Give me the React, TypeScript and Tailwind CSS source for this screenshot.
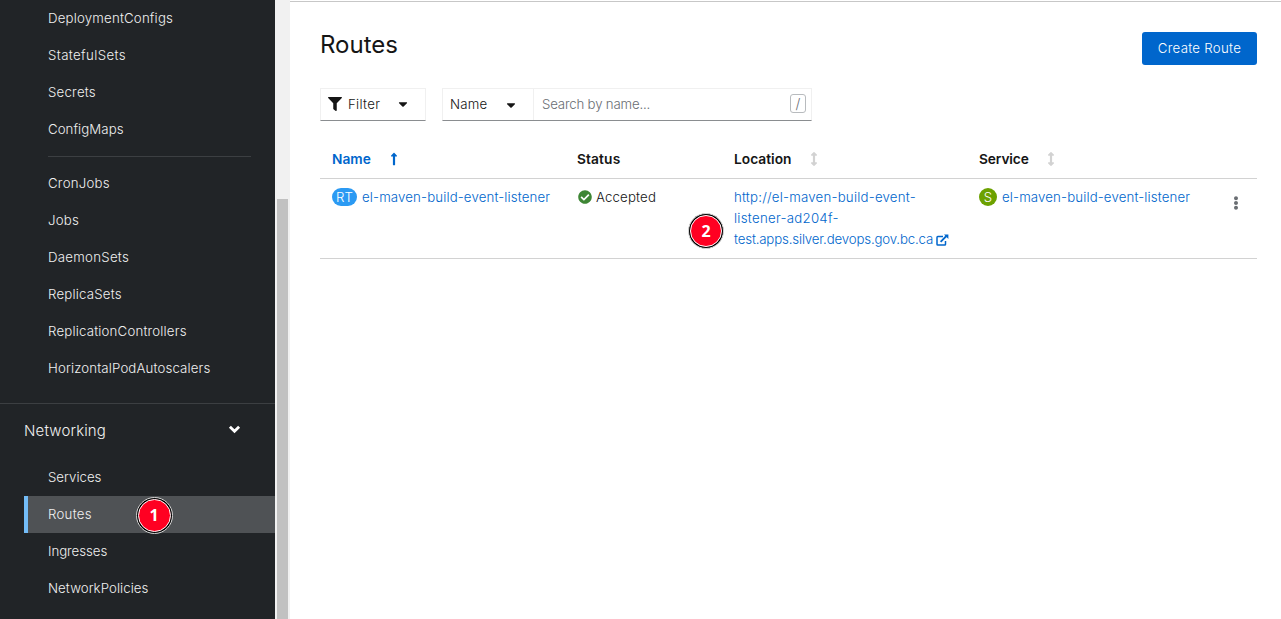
import React from "react";
import { FaFilter, FaCaretDown, FaLongArrowAltUp, FaArrowsAltV, FaCheckCircle, FaEllipsisV } from "react-icons/fa";

type NavEntry = { label: string; active?: boolean; track: string };

const workloads: NavEntry[] = [
  { label: "DeploymentConfigs", track: "tracking-[0.18px]" },
  { label: "StatefulSets", track: "tracking-[0.38px]" },
  { label: "Secrets", track: "tracking-[0.22px]" },
  { label: "ConfigMaps", track: "tracking-[0.06px]" },
];

const jobs: NavEntry[] = [
  { label: "CronJobs", track: "tracking-[0.22px]" },
  { label: "Jobs", track: "tracking-[0.22px]" },
  { label: "DaemonSets", track: "tracking-[0.26px]" },
  { label: "ReplicaSets", track: "tracking-[0.2px]" },
  { label: "ReplicationControllers", track: "tracking-[0.18px]" },
  { label: "HorizontalPodAutoscalers", track: "tracking-[0.13px]" },
];

const networking: NavEntry[] = [
  { label: "Services", track: "tracking-normal" },
  { label: "Routes", active: true, track: "tracking-[0.26px]" },
  { label: "Ingresses", track: "tracking-[-0.05px]" },
  { label: "NetworkPolicies", track: "tracking-[0.06px]" },
];

function Marker({ n, className }: { n: number; className: string }) {
  return (
    <span className={`absolute flex items-center justify-center rounded-full border border-[#d8d8d8] bg-black p-[1px] ${className}`}>
      <span className="flex size-full items-center justify-center rounded-full border border-white bg-[#ff0022] font-['Noto_Sans'] text-[16px] leading-none font-bold text-white">
        {n}
      </span>
    </span>
  );
}

function ExternalLink() {
  return (
    <svg viewBox="0 0 13 12" className="h-3 w-[13px]" fill="none" stroke="currentColor">
      <path d="M7 2.6H1.8a.8.8 0 0 0-.8.8v6.8a.8.8 0 0 0 .8.8h6.9a.8.8 0 0 0 .8-.8V7" strokeWidth="1.5" />
      <path d="M4.6 7.8 10.4 2" strokeWidth="1.8" />
      <path d="M8 .6h4.4V5Z" fill="currentColor" stroke="none" />
    </svg>
  );
}

function NavItem({ item }: { item: NavEntry }) {
  return (
    <li className={`relative ml-6 flex h-[37px] items-center border-l-4 pl-5 ${item.active ? "border-[#73bcf7] bg-[#4f5255]" : "border-transparent"}`}>
      <span className={item.track}>{item.label}</span>
      {item.active && <Marker n={1} className="top-[0.5px] left-[107.5px] size-[37px]" />}
    </li>
  );
}

function Sidebar() {
  return (
    <nav className="flex w-[275px] shrink-0 flex-col bg-[#212427] text-[13.25px] text-[#f0f0f0]">
      <ul>{workloads.map((i) => <NavItem key={i.label} item={i} />)}</ul>
      <div className="mt-2 mr-6 mb-2 ml-12 h-px shrink-0 bg-[#3c3f42]" />
      <ul>{jobs.map((i) => <NavItem key={i.label} item={i} />)}</ul>
      <div className="mt-4 h-px shrink-0 bg-[#3c3f42]" />
      <div className="flex h-[55px] shrink-0 items-center justify-between pr-[34px] pl-6 text-[15px]">
        <span className="tracking-[0.15px]">Networking</span>
        <svg viewBox="0 0 13 9" className="mb-1 h-[9px] w-[13px] text-white" fill="none" stroke="currentColor" strokeWidth="2.8">
          <path d="m1.9 1.7 4.6 4.5 4.6-4.5" />
        </svg>
      </div>
      <ul>{networking.map((i) => <NavItem key={i.label} item={i} />)}</ul>
    </nav>
  );
}

function Toolbar() {
  return (
    <div className="mt-[23px] flex h-[33px] gap-4 text-[13.25px]">
      <button className="flex w-[106px] items-center border border-[#f0f0f0] border-b-[#8a8d90] pl-[7px]">
        <FaFilter className="mb-px size-[14px]" />
        <span className="ml-[6px] w-[33px] text-left tracking-[0.28px]">Filter</span>
        <FaCaretDown className="mb-[2px] ml-[15px] size-[14px]" />
      </button>
      <div className="flex w-[370px] border border-[#f0f0f0] border-b-[#8a8d90]">
        <button className="flex w-[91px] items-center border-r border-[#f0f0f0] pl-[7px]">
          <span className="w-[38px] text-left tracking-[0.2px]">Name</span>
          <FaCaretDown className="ml-[16px] size-[14px]" />
        </button>
        <div className="flex flex-1 items-center justify-between pr-[5px] pl-2 text-[#6a6e73]">
          <span className="tracking-[-0.19px]">Search by name...</span>
          <kbd className="mb-[2px] flex h-[19px] w-4 items-center justify-center rounded-[3px] border border-[#b8bbbe] font-[inherit] text-[14px]">/</kbd>
        </div>
      </div>
    </div>
  );
}

const columns = "grid grid-cols-[245px_157px_245px_245px_1fr] pl-3";

function RoutesTable() {
  return (
    <section className="mt-[19px] text-[13.25px] leading-[21px]">
      <div className={`${columns} h-[39px] items-center border-b border-[#d2d2d2] text-[13.75px] font-semibold`}>
        <div className="flex items-center text-[#0066cc]">
          <span className="w-[55px]">Name</span>
          <FaLongArrowAltUp className="size-[14px]" />
        </div>
        <div className="tracking-[0.12px]">Status</div>
        <div className="flex items-center">
          <span className="w-[73px]">Location</span>
          <FaArrowsAltV className="size-[14px] text-[#d2d2d2]" />
        </div>
        <div className="flex items-center">
          <span className="w-[65px] tracking-[-0.12px]">Service</span>
          <FaArrowsAltV className="size-[14px] text-[#d2d2d2]" />
        </div>
      </div>
      <div className={`${columns} h-[80px] border-b border-[#d2d2d2] pt-2`}>
        <a className="flex h-[21px] items-center text-[#0066cc]">
          <span className="mb-px flex h-[18px] w-[25px] items-center justify-center rounded-full bg-[#2b9af3] text-white">RT</span>
          <span className="ml-[5px] tracking-[0.13px]">el-maven-build-event-listener</span>
        </a>
        <div className="flex h-[21px] items-center">
          <FaCheckCircle className="mb-px ml-px size-[14px] text-[#3e8635]" />
          <span className="ml-[4px] tracking-[0.15px]">Accepted</span>
        </div>
        <a className="relative flex flex-col text-[#0066cc]">
          <span className="h-[21px] tracking-[0.21px]">http://el-maven-build-event-</span>
          <span className="h-[21px] tracking-[0.27px]">listener-ad204f-</span>
          <span className="flex h-[21px] items-center whitespace-nowrap">
            <span className="w-[202px] tracking-[-0.16px]">test.apps.silver.devops.gov.bc.ca</span>
            <ExternalLink />
          </span>
          <Marker n={2} className="top-[26px] left-[-46px] size-[36px]" />
        </a>
        <a className="flex h-[21px] items-center text-[#0066cc]">
          <span className="mb-px flex size-[18px] items-center justify-center rounded-full bg-[#6ca100] text-white">S</span>
          <span className="ml-[5px] tracking-[0.13px]">el-maven-build-event-listener</span>
        </a>
        <FaEllipsisV className="mt-[9px] ml-[5px] size-[14px] text-[#6a6e73]" />
      </div>
    </section>
  );
}

export default function App() {
  return (
    <div className="flex h-[619px] w-[1281px] overflow-hidden bg-white font-['Inter',sans-serif] font-[350] text-[#151515]">
      <Sidebar />
      <div className="flex w-[15px] shrink-0 flex-col bg-[#f1f1f1] pt-[199px] pr-[2px] pl-[2px]">
        <div className="flex-1 bg-[#c1c1c1]" />
      </div>
      <main className="mt-px flex-1 border-t border-[#c7c7c7] pr-6 pl-[30px]">
        <header className="flex h-[63px] items-start justify-between">
          <h1 className="mt-[27px] text-[24px] leading-[31px] font-normal">Routes</h1>
          <button className="mt-[30px] h-[33px] w-[115px] rounded-[3px] bg-[#0066cc] text-[13.25px] tracking-[0.28px] text-white">Create Route</button>
        </header>
        <Toolbar />
        <RoutesTable />
      </main>
    </div>
  );
}
